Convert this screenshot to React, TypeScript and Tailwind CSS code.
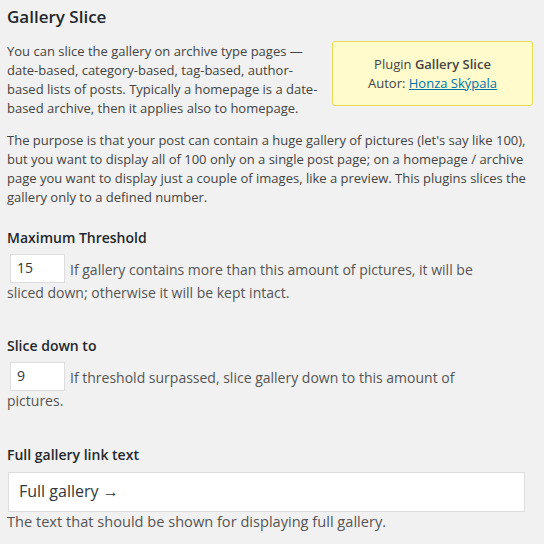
export default function App() {
  return (
    <main className="min-h-[544px] bg-[#f1f1f1] px-[7px] pt-[3px] font-['Open_Sans',sans-serif] text-[13px] leading-[19px] text-[#444]">
      <h2 className="text-[17px] font-semibold leading-[28px] text-[#23282d]">Gallery Slice</h2>

      <div className="mt-[11px] flex items-start justify-between">
        <p className="w-[316px]">
          You can slice the gallery on archive type pages — date-based, category-based, tag-based, author-based lists of posts. Typically a homepage is a date-based archive, then it applies also to homepage.
        </p>
        <div className="mr-[4px] mt-[-1px] flex h-[65px] w-[201px] flex-col items-center justify-center rounded-[3px] border border-[#e6db55] bg-[#fffbcc] text-[#444]">
          <p>
            Plugin <strong className="font-semibold">Gallery Slice</strong>
          </p>
          <p>
            Autor:{' '}
            <a href="#" className="text-[#0073aa] underline">
              Honza Skýpala
            </a>
          </p>
        </div>
      </div>

      <p className="mt-[13px] w-[530px]">
        The purpose is that your post can contain a huge gallery of pictures (let's say like 100), but you want to display all of 100 only on a single post page; on a homepage / archive page you want to display just a couple of images, like a preview. This plugins slices the gallery only to a defined number.
      </p>

      <section className="mt-[21px]">
        <h3 className="text-[14px] font-semibold leading-[20px] text-[#23282d]">Maximum Threshold</h3>
        <p className="mt-[11px] w-[490px] text-[14px] leading-[22px] text-[#555]">
          <span className="mb-[-1px] ml-[3px] mr-[5px] mt-[-7px] inline-flex h-[29px] w-[55px] items-center border border-[#ddd] bg-white px-[6px] align-middle text-[14px] leading-[20px] text-[#32373c]">
            15
          </span>
          If gallery contains more than this amount of pictures, it will be sliced down; otherwise it will be kept intact.
        </p>
      </section>

      <section className="mt-[32px]">
        <h3 className="text-[14px] font-semibold leading-[20px] text-[#23282d]">Slice down to</h3>
        <p className="mt-[11px] w-[490px] text-[14px] leading-[22px] text-[#555]">
          <span className="mb-[-1px] ml-[3px] mr-[5px] mt-[-7px] inline-flex h-[29px] w-[55px] items-center border border-[#ddd] bg-white px-[6px] align-middle text-[14px] leading-[20px] text-[#32373c]">
            9
          </span>
          If threshold surpassed, slice gallery down to this amount of pictures.
        </p>
      </section>

      <section className="mt-[33px]">
        <h3 className="text-[14px] font-semibold leading-[20px] text-[#23282d]">Full gallery link text</h3>
        <div className="ml-[1px] mt-[7px] flex h-[40px] w-[517px] items-center border border-[#ddd] bg-white px-[10px] text-[16px] text-[#32373c]">
          Full gallery →
        </div>
        <p className="text-[14.6px] text-[#555]">The text that should be shown for displaying full gallery.</p>
      </section>
    </main>
  )
}
